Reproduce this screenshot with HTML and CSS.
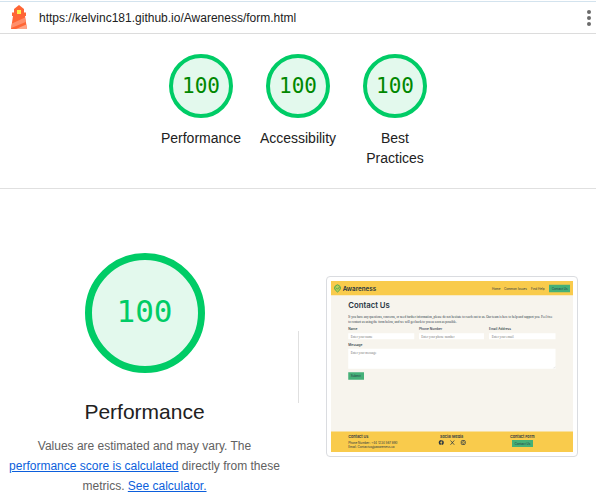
FILE: index.html
```html
<!DOCTYPE html>
<html lang="en">
<head>
<meta charset="utf-8">
<meta name="viewport" content="width=device-width, initial-scale=1">
<title>Lighthouse report</title>
<link rel="stylesheet" href="styles.css">
</head>
<body>
<header class="topbar">
  <svg class="logo" viewBox="0 0 18 25" aria-hidden="true">
    <path d="M9 0 14 4v3.500h2V11h-1l2 13H1L3 11H2V7.500h2V4z" fill="#ff6635"/>
    <path d="M2 18.500 15 12.500l.7 4.500L1.300 23z" fill="#ff8f6b"/>
    <path d="M6 24 16.300 19.500 17 24z" fill="#ffa385"/>
    <path d="M7 5h4v4H7z" fill="#fff04a"/>
  </svg>
  <span class="url">https://kelvinc181.github.io/Awareness/form.html</span>
  <button class="menu" type="button" aria-label="Tools menu">
    <svg viewBox="0 0 4 16" aria-hidden="true"><g fill="#6b6b6b"><circle cx="2" cy="2" r="2"/><circle cx="2" cy="8" r="2"/><circle cx="2" cy="14" r="2"/></g></svg>
  </button>
</header>
<main>
  <nav class="scores" aria-label="Scores">
    <div class="score"><div class="gauge">100</div><div class="label">Performance</div></div>
    <div class="score"><div class="gauge">100</div><div class="label">Accessibility</div></div>
    <div class="score"><div class="gauge">100</div><div class="label">Best Practices</div></div>
  </nav>
  <section class="category">
    <div class="summary">
      <div class="gauge gauge-large">100</div>
      <h1>Performance</h1>
      <p>Values are estimated and may vary. The <a href="#score">performance score is calculated</a> directly from these metrics. <a href="#calculator">See calculator.</a></p>
    </div>
    <div class="preview">
      <svg class="shot" viewBox="0 0 968 684" role="img" aria-label="Contact form page">
        <path d="M0 0h968v684H0z" fill="#f7f4ed"/>
        <path d="M0 0h968v57H0zM0 602h968v82H0z" fill="#f9cb4c"/>
        <path d="M17 20q9-10 18 0 6 8 0 16l-9 8-9-8q-6-8 0-16z" fill="#b8cf55" stroke="#55a94d" stroke-width="4"/>
        <path d="m20 27 6 6 8-9" fill="none" stroke="#3c9552" stroke-width="3"/>
        <g class="poppins">
          <text class="brand" x="47" y="39">Awareness</text>
          <g class="nav">
            <text x="644" y="35">Home</text>
            <text x="692" y="35">Common Issues</text>
            <text x="800" y="35">Find Help</text>
          </g>
          <path d="M872 15h84v30h-84z" fill="#45b078"/>
          <text class="nav" x="883" y="35">Contact Us</text>
          <text class="heading" x="69" y="108">Contact Us</text>
          <g class="field">
            <text x="69" y="196">Name</text>
            <text x="352" y="196">Phone Number</text>
            <text x="632" y="196">Email Address</text>
            <text x="69" y="261">Message</text>
          </g>
        </g>
        <g class="body-copy">
          <text x="69" y="149">If you have any questions, concerns, or need further information, please do not hesitate to reach out to us. Our team is here to help and support you. Feel free</text>
          <text x="69" y="168">to contact us using the form below, and we will get back to you as soon as possible.</text>
        </g>
        <path d="M69 209h264v24H69zM352 209h260v24H352zM632 209h266v24H632zM69 271h829v80H69z" fill="#fff"/>
        <g class="hint">
          <text x="79" y="226">Enter your name</text>
          <text x="361" y="226">Enter your phone number</text>
          <text x="643" y="226">Enter your email</text>
          <text x="79" y="290">Enter your message</text>
        </g>
        <path d="m890 349 6-6m-2 6 2-2" stroke="#999"/>
        <path d="M69 365h63v30H69zM724 636h84v28h-84z" fill="#45b078"/>
        <g class="poppins nav">
          <text x="79" y="385">Submit</text>
          <text class="foot-title" x="69" y="628">Contact Us</text>
          <text x="69" y="650">Phone Number: +44 1234 567 890</text>
          <text x="69" y="668">Email: Contactus@awareness.ca</text>
          <text class="foot-title" x="436" y="628">Social Media</text>
          <text class="foot-title" x="716" y="628">Contact Form</text>
          <text x="734" y="655">Contact Us</text>
        </g>
        <circle cx="441" cy="646" r="10" fill="#263442"/>
        <path d="M441 656v-14q0-4 5-3m-9 7h8" fill="none" stroke="#f9cb4c" stroke-width="3"/>
        <path d="m478 638 15 17m0-17-15 17" stroke="#263442" stroke-width="3"/>
        <rect x="521" y="638" width="16" height="16" rx="4" fill="none" stroke="#263442" stroke-width="3"/>
        <circle cx="529" cy="646" r="4" fill="none" stroke="#263442" stroke-width="2"/>
      </svg>
    </div>
  </section>
</main>
</body>
</html>
```
FILE: styles.css
```css
* {
  box-sizing: border-box;
}

body {
  margin: 0;
  background: #fff;
  color: #212121;
  font-family: "Liberation Sans", Arial, sans-serif;
}

.topbar {
  display: flex;
  align-items: center;
  height: 34px;
  padding: 2px 1px 0 10px;
  border-bottom: 1px solid #dcdcdc;
  background: linear-gradient(#d3e3ee, #d3e3ee) 0 1px / 100% 1px no-repeat;
}

.logo {
  width: 18px;
  height: 25px;
}

.url {
  flex: 1;
  margin-left: 11px;
  font-size: 12px;
  line-height: 20px;
}

.menu {
  display: flex;
  padding: 4px;
  border: 0;
  background: none;
}

.menu svg {
  width: 4px;
  height: 16px;
}

.scores {
  display: flex;
  justify-content: center;
  padding: 20px 0;
  border-bottom: 1px solid #e0e0e0;
}

.score {
  display: flex;
  flex-direction: column;
  align-items: center;
  gap: 10px;
  width: 97px;
}

.gauge {
  display: grid;
  place-items: center;
  width: 64px;
  height: 64px;
  border: 4px solid #0c6;
  border-radius: 50%;
  background: #e3f9ed;
  color: #080;
  font: 21px "DejaVu Sans Mono", monospace;
}

.label {
  padding: 0 8px;
  font-size: 14px;
  line-height: 20px;
  text-align: center;
}

.category {
  display: grid;
  grid-template-columns: 1fr 1fr;
  align-items: center;
  padding-top: 64px;
}

.summary {
  display: flex;
  flex-direction: column;
  align-items: center;
  padding: 0 9px 0 0;
}

.gauge-large {
  width: 120px;
  height: 120px;
  padding-bottom: 4px;
  border-width: 7px;
  color: #0c6;
  font-size: 31px;
}

h1 {
  margin: 25px 0 10px;
  font-size: 21px;
  font-weight: 400;
  line-height: 28px;
}

p {
  margin: 0;
  padding: 0 8px;
  color: #616161;
  font-size: 12px;
  line-height: 20px;
  text-align: center;
}

a {
  color: #0c5fdc;
}

.preview {
  display: flex;
  align-items: center;
  padding: 0 18px 16px 0;
}

.preview::before {
  content: "";
  height: 72px;
  margin-right: 27px;
  border-left: 1px solid #e0e0e0;
}

.shot {
  flex: 1;
  min-width: 0;
  padding: 4px;
  border: 1px solid #dadce0;
  border-radius: 4px;
}

.shot text {
  fill: #263442;
}

.poppins {
  font-family: Inter, sans-serif;
}

.shot .brand {
  font-size: 25px;
  font-weight: 600;
}

.shot .heading {
  font-size: 31px;
  font-weight: 600;
}

.nav {
  font-size: 12px;
}

.field {
  font-size: 13px;
  font-weight: 500;
}

.foot-title {
  font-size: 15px;
  font-weight: 600;
}

.body-copy {
  font: 13px "Liberation Serif", serif;
}

.hint {
  font: 13px "Liberation Serif", serif;
}

.shot .hint text {
  fill: #777;
}
```
